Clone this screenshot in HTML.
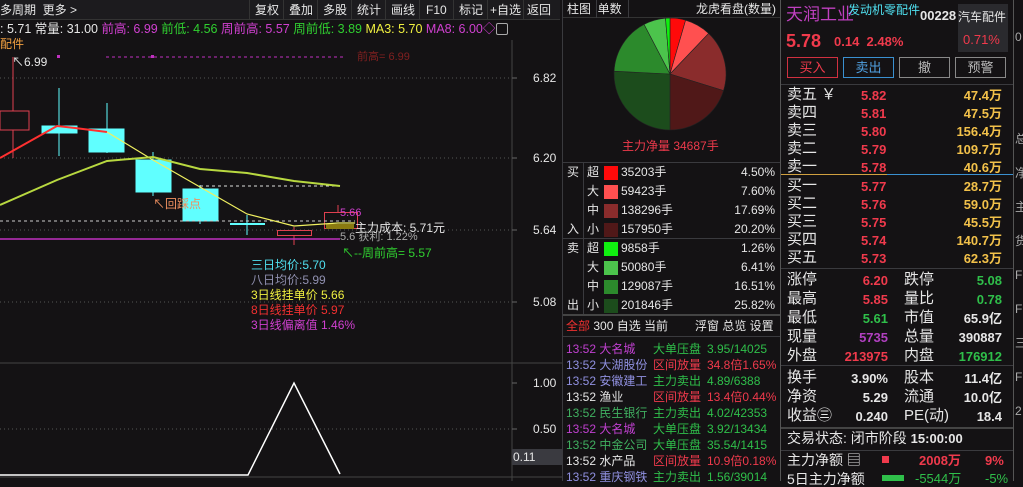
<!DOCTYPE html>
<html><head><meta charset="utf-8"><style>
*{margin:0;padding:0;box-sizing:border-box}
body{width:1023px;height:481px;background:#141214;overflow:hidden;position:relative;font-family:"Liberation Sans","Noto Sans CJK SC",sans-serif;color:#ddd}
.a{position:absolute;white-space:nowrap;line-height:1}
.r{color:#f03a4c}.g{color:#2fbf4a}.y{color:#f2c14a}.w{color:#e6e6e6}
.ln{position:absolute;background:#3a3a3e}
</style></head><body>
<div class="a" style="left:0;top:0;width:560px;height:20px;background:#1c1b1e;border-bottom:1px solid #333"></div>
<div class="a w" style="left:0;top:4px;font-size:12px">多周期&nbsp; 更多 &gt;</div>
<div class="a w" style="left:249px;top:0;height:20px;font-size:12px;display:flex">
<span style="width:34px;border-left:1px solid #333;padding:4px 0 0 5px">复权</span><span style="width:34px;border-left:1px solid #333;padding:4px 0 0 5px">叠加</span><span style="width:34px;border-left:1px solid #333;padding:4px 0 0 5px">多股</span><span style="width:34px;border-left:1px solid #333;padding:4px 0 0 5px">统计</span><span style="width:34px;border-left:1px solid #333;padding:4px 0 0 5px">画线</span><span style="width:34px;border-left:1px solid #333;padding:4px 0 0 6px">F10</span><span style="width:34px;border-left:1px solid #333;padding:4px 0 0 5px">标记</span><span style="width:36px;border-left:1px solid #333;padding:4px 0 0 2px">+自选</span><span style="width:31px;border-left:1px solid #333;padding:4px 0 0 3px">返回</span></div>
<div class="a" style="left:0;top:23px;font-size:12.5px"><span class="w">: 5.71 常量: 31.00 </span><span style="color:#d040d0">前高: 6.99 </span><span style="color:#30d030">前低: 4.56 </span><span style="color:#d040d0">周前高: 5.57 </span><span style="color:#30d030">周前低: 3.89 </span><span style="color:#f0f040">MA3: 5.70 </span><span style="color:#d040d0">MA8: 6.00◇</span></div>
<div class="a" style="left:496px;top:23px;width:12px;height:12px;border:1px solid #aaa;border-radius:2px"></div>
<div class="a" style="left:0;top:38px;font-size:12px;color:#f2a040">配件</div>
<svg class="a" style="left:0;top:40px" width="563" height="441">
<g transform="translate(0,-40)">
<line x1="512" y1="20" x2="512" y2="481" stroke="#444"/>
<g stroke="#555" stroke-dasharray="1,3"><line x1="0" y1="78" x2="512" y2="78"/><line x1="0" y1="158" x2="512" y2="158"/><line x1="0" y1="230" x2="512" y2="230"/><line x1="0" y1="302" x2="512" y2="302"/><line x1="0" y1="429" x2="512" y2="429"/></g>
<g stroke="#666"><line x1="512" y1="78" x2="517" y2="78"/><line x1="512" y1="158" x2="517" y2="158"/><line x1="512" y1="230" x2="517" y2="230"/><line x1="512" y1="302" x2="517" y2="302"/><line x1="512" y1="383" x2="517" y2="383"/><line x1="512" y1="429" x2="517" y2="429"/></g>
<line x1="0" y1="363" x2="563" y2="363" stroke="#444"/>
<line x1="0" y1="477" x2="563" y2="477" stroke="#444"/>
<line x1="106" y1="57" x2="345" y2="57" stroke="#c030c0" stroke-dasharray="3,3"/>
<rect x="57" y="55" width="3" height="3" fill="#c030c0"/><rect x="151" y="55" width="3" height="3" fill="#c030c0"/>
<g stroke="#e04050" fill="none"><line x1="13" y1="57" x2="13" y2="158"/><rect x="0" y="111" width="29" height="19" fill="#141214"/></g>
<g stroke="#60ffff" fill="#60ffff"><line x1="59" y1="88" x2="59" y2="156"/><rect x="42" y="126" width="35" height="7"/>
<line x1="107" y1="103" x2="107" y2="153"/><rect x="89" y="129" width="35" height="23"/>
<line x1="153" y1="152" x2="153" y2="196"/><rect x="136" y="160" width="35" height="32"/>
<line x1="200" y1="185" x2="200" y2="224"/><rect x="183" y="189" width="35" height="32"/>
<line x1="247" y1="215" x2="247" y2="235"/><line x1="230" y1="224" x2="265" y2="224" stroke-width="2"/></g>
<g stroke="#e04050" fill="none"><line x1="294" y1="227" x2="294" y2="245"/><rect x="277.5" y="230.5" width="34" height="5" fill="#141214"/>
<line x1="338" y1="205" x2="338" y2="212"/><rect x="324.5" y="212.5" width="33" height="16"/></g>
<rect x="326" y="224" width="28" height="5" fill="#8a7a10"/>
<line x1="200" y1="186" x2="340" y2="186" stroke="#ddd" stroke-dasharray="3,3"/>
<line x1="0" y1="221" x2="355" y2="221" stroke="#ccc" stroke-dasharray="3,3"/>
<line x1="0" y1="239" x2="340" y2="239" stroke="#c030c0" stroke-width="1.5"/>
<polyline points="0,158 57,126 75,128 107,132" fill="none" stroke="#ff3030" stroke-width="2"/>
<polyline points="107,132 153,160 200,187 247,214 294,226 338,223 355,223" fill="none" stroke="#f0f060" stroke-width="1.2"/>
<polyline points="0,205 57,180 107,161 153,157 200,169 247,173 294,181 340,186" fill="none" stroke="#b8d840" stroke-width="2"/>
<polyline points="0,475 248,475 294,383 340,474" fill="none" stroke="#fff" stroke-width="1.5"/>
<rect x="512" y="449" width="51" height="16" fill="#3a3a40"/>
</g></svg>
<div class="a w" style="left:533px;top:72px;font-size:12px">6.82</div>
<div class="a w" style="left:533px;top:152px;font-size:12px">6.20</div>
<div class="a w" style="left:533px;top:224px;font-size:12px">5.64</div>
<div class="a w" style="left:533px;top:296px;font-size:12px">5.08</div>
<div class="a w" style="left:533px;top:377px;font-size:12px">1.00</div>
<div class="a w" style="left:533px;top:423px;font-size:12px">0.50</div>
<div class="a w" style="left:513px;top:451px;font-size:12px">0.11</div>
<div class="a w" style="left:12px;top:56px;font-size:12px">↖6.99</div>
<div class="a" style="left:357px;top:52px;font-size:11px;color:#802020">前高= 6.99</div>
<div class="a" style="left:153px;top:198px;font-size:12px;color:#f09060">↖回踩点</div>
<div class="a" style="left:340px;top:208px;font-size:11px;color:#d040d0">5.66</div>
<div class="a w" style="left:355px;top:222px;font-size:12px">主力成本: 5.71元</div>
<div class="a" style="left:340px;top:232px;font-size:11px;color:#aaa">5.6 获利: 1.22%</div>
<div class="a" style="left:342px;top:247px;font-size:12px;color:#30d030">↖--周前高= 5.57</div>
<div class="a" style="left:251px;top:258px;font-size:12px;line-height:15px">
<div style="color:#50e0f0">三日均价:5.70</div><div style="color:#9090b0">八日均价:5.99</div><div style="color:#f0f040">3日线挂单价 5.66</div><div style="color:#f03030">8日线挂单价 5.97</div><div style="color:#d040d0">3日线偏离值 1.46%</div></div>
<div class="ln" style="left:562px;top:0;width:1px;height:481px"></div>
<div class="a" style="left:563px;top:0;width:217px;height:18px;border-bottom:1px solid #333"></div>
<div class="a w" style="left:567px;top:3px;font-size:12px">柱图 &nbsp;单数</div>
<div class="ln" style="left:596px;top:0;width:1px;height:18px"></div><div class="ln" style="left:628px;top:0;width:1px;height:18px"></div>
<div class="a w" style="left:696px;top:3px;font-size:12px">龙虎看盘(数量)</div>
<svg class="a" style="left:563px;top:0" width="217" height="160"><g transform="translate(-563,0)" stroke="#222" stroke-width="0.6">
<path d="M670,74 L670,18 A56,56 0 0 1 685.6,20.2Z" fill="#ff0a0a"/>
<path d="M670,74 L685.6,20.2 A56,56 0 0 1 708.6,33.4Z" fill="#ff5050"/>
<path d="M670,74 L708.6,33.4 A56,56 0 0 1 723.5,90.6Z" fill="#8a2c2c"/>
<path d="M670,74 L723.5,90.6 A56,56 0 0 1 670,130Z" fill="#501818"/>
<path d="M670,74 L670,130 A56,56 0 0 1 614.1,71.2Z" fill="#1c4c1c"/>
<path d="M670,74 L614.1,71.2 A56,56 0 0 1 644.1,24.4Z" fill="#2c8a2c"/>
<path d="M670,74 L644.1,24.4 A56,56 0 0 1 665.5,18.2Z" fill="#4cc44c"/>
<path d="M670,74 L665.5,18.2 A56,56 0 0 1 670,18Z" fill="#10f010"/>
</g></svg>
<div class="a" style="left:622px;top:140px;font-size:12px;color:#f03a4c">主力净量 34687手</div>
<div class="ln" style="left:563px;top:162px;width:217px;height:1px"></div>
<div class="ln" style="left:563px;top:238px;width:217px;height:1px"></div>
<div class="ln" style="left:563px;top:314px;width:217px;height:2px;background:#444"></div>
<div class="ln" style="left:583px;top:162px;width:1px;height:152px"></div>
<div class="a w" style="left:563px;top:163px;width:217px;font-size:12px;line-height:19px">
<div style="position:absolute;left:4px;top:0">买</div><div style="position:absolute;left:4px;top:57px">入</div><div style="position:absolute;left:4px;top:76px">卖</div><div style="position:absolute;left:4px;top:133px">出</div>
<div style="position:absolute;left:24px;top:0">超<br>大<br>中<br>小<br>超<br>大<br>中<br>小</div>
<div style="position:absolute;left:41px;top:3px;width:14px;line-height:0">
<i style="display:block;height:14px;margin-bottom:5px;background:#ff0a0a"></i><i style="display:block;height:14px;margin-bottom:5px;background:#ff5050"></i><i style="display:block;height:14px;margin-bottom:5px;background:#8a2c2c"></i><i style="display:block;height:14px;margin-bottom:5px;background:#501818"></i><i style="display:block;height:14px;margin-bottom:5px;background:#10f010"></i><i style="display:block;height:14px;margin-bottom:5px;background:#4cc44c"></i><i style="display:block;height:14px;margin-bottom:5px;background:#2c8a2c"></i><i style="display:block;height:14px;background:#1c4c1c"></i></div>
<div style="position:absolute;left:58px;top:0">35203手<br>59423手<br>138296手<br>157950手<br>9858手<br>50080手<br>129087手<br>201846手</div>
<div style="position:absolute;right:5px;top:0;text-align:right">4.50%<br>7.60%<br>17.69%<br>20.20%<br>1.26%<br>6.41%<br>16.51%<br>25.82%</div></div>
<div class="a w" style="left:566px;top:320px;font-size:12px"><span style="color:#f03030">全部</span> 300 自选 当前</div>
<div class="a w" style="left:695px;top:320px;font-size:12px">浮窗 总览 设置</div>
<div class="ln" style="left:563px;top:336px;width:217px;height:1px"></div>
<div class="a" style="left:566px;top:341px;font-size:12px;line-height:16px">
<div><span style="color:#c040d0">13:52 大名城</span></div><div style="color:#9090e0">13:52 大湖股份</div><div style="color:#9090e0">13:52 安徽建工</div><div class="w">13:52 渔业</div><div style="color:#40b060">13:52 民生银行</div><div style="color:#c040d0">13:52 大名城</div><div style="color:#40b060">13:52 中金公司</div><div class="w">13:52 水产品</div><div style="color:#9090e0">13:52 重庆钢铁</div></div>
<div class="a" style="left:653px;top:341px;font-size:12px;line-height:16px">
<div class="g">大单压盘</div><div class="r">区间放量</div><div class="g">主力卖出</div><div class="r">区间放量</div><div class="g">主力卖出</div><div class="g">大单压盘</div><div class="g">大单压盘</div><div class="r">区间放量</div><div class="g">主力卖出</div></div>
<div class="a" style="left:707px;top:341px;font-size:12px;line-height:16px">
<div class="g">3.95/14025</div><div class="r">34.8倍1.65%</div><div class="g">4.89/6388</div><div class="r">13.4倍0.44%</div><div class="g">4.02/42353</div><div class="g">3.92/13434</div><div class="g">35.54/1415</div><div class="r">10.9倍0.18%</div><div class="g">1.56/39014</div></div>
<div class="ln" style="left:780px;top:0;width:1px;height:481px;background:#555"></div>
<div class="ln" style="left:1013px;top:0;width:1px;height:481px;background:#555"></div>
<div class="a" style="left:786px;top:6px;font-size:17px;color:#c040c0">天润工业</div>
<div class="a" style="left:848px;top:4px;font-size:12px;color:#50e0f0">发动机零配件</div>
<div class="a w" style="left:920px;top:9px;font-size:13px;font-weight:bold">00228</div>
<div class="a" style="left:958px;top:4px;width:50px;height:48px;background:#2a2a2e"></div>
<div class="a w" style="left:958px;top:11px;font-size:12px">汽车配件</div>
<div class="a r" style="left:963px;top:33px;font-size:13px">0.71%</div>
<div class="a r" style="left:786px;top:32px;font-size:18px;font-weight:bold">5.78</div>
<div class="a r" style="left:834px;top:35px;font-size:13px;font-weight:bold">0.14&nbsp; 2.48%</div>
<div class="a" style="left:787px;top:57px;width:51px;height:21px;border:1px solid #d03040;color:#f03a4c;font-size:13px;text-align:center;padding-top:3px">买入</div>
<div class="a" style="left:843px;top:57px;width:51px;height:21px;border:1px solid #3a90d0;color:#50a0e0;font-size:13px;text-align:center;padding-top:3px">卖出</div>
<div class="a" style="left:899px;top:57px;width:51px;height:21px;border:1px solid #888;color:#bbb;font-size:13px;text-align:center;padding-top:3px">撤</div>
<div class="a" style="left:955px;top:57px;width:51px;height:21px;border:1px solid #888;color:#bbb;font-size:13px;text-align:center;padding-top:3px">预警</div>
<div class="ln" style="left:781px;top:84px;width:232px;height:1px"></div>
<div class="a" style="left:781px;top:174px;width:106px;height:1px;background:#d0a040"></div>
<div class="a" style="left:887px;top:174px;width:126px;height:1px;background:#3a90d0"></div>
<div class="a w" style="left:787px;top:86px;font-size:15px;line-height:18px">卖五 ￥<br>卖四<br>卖三<br>卖二<br>卖一</div>
<div class="a r" style="left:861px;top:87px;font-size:13px;font-weight:bold;line-height:18px">5.82<br>5.81<br>5.80<br>5.79<br>5.78</div>
<div class="a y" style="right:21px;top:87px;font-size:13px;font-weight:bold;line-height:18px;text-align:right">47.4万<br>47.5万<br>156.4万<br>109.7万<br>40.6万</div>
<div class="a w" style="left:787px;top:177px;font-size:15px;line-height:18px">买一<br>买二<br>买三<br>买四<br>买五</div>
<div class="a r" style="left:861px;top:178px;font-size:13px;font-weight:bold;line-height:18px">5.77<br>5.76<br>5.75<br>5.74<br>5.73</div>
<div class="a y" style="right:21px;top:178px;font-size:13px;font-weight:bold;line-height:18px;text-align:right">28.7万<br>59.0万<br>45.5万<br>140.7万<br>62.3万</div>
<div class="ln" style="left:781px;top:268px;width:232px;height:1px"></div>
<div class="a w" style="left:787px;top:270px;font-size:15px;line-height:19px">涨停<br>最高<br>最低<br>现量<br>外盘</div>
<div class="a" style="right:135px;top:271px;font-size:13px;font-weight:bold;line-height:19px;text-align:right"><span class="r">6.20</span><br><span class="r">5.85</span><br><span class="g">5.61</span><br><span style="color:#b040c0">5735</span><br><span class="r">213975</span></div>
<div class="a w" style="left:904px;top:270px;font-size:15px;line-height:19px">跌停<br>量比<br>市值<br>总量<br>内盘</div>
<div class="a" style="right:21px;top:271px;font-size:13px;font-weight:bold;line-height:19px;text-align:right"><span class="g">5.08</span><br><span class="g">0.78</span><br><span class="w">65.9亿</span><br><span class="w">390887</span><br><span class="g">176912</span></div>
<div class="ln" style="left:781px;top:365px;width:232px;height:1px"></div>
<div class="a w" style="left:787px;top:368px;font-size:15px;line-height:19px">换手<br>净资<br>收益㊂</div>
<div class="a w" style="right:135px;top:369px;font-size:13px;font-weight:bold;line-height:19px;text-align:right">3.90%<br>5.29<br>0.240</div>
<div class="a w" style="left:904px;top:368px;font-size:15px;line-height:19px">股本<br>流通<br>PE(动)</div>
<div class="a w" style="right:21px;top:369px;font-size:13px;font-weight:bold;line-height:19px;text-align:right">11.4亿<br>10.0亿<br>18.4</div>
<div class="ln" style="left:781px;top:427px;width:232px;height:2px;background:#444"></div>
<div class="a w" style="left:787px;top:431px;font-size:14px">交易状态: 闭市阶段 <b style="font-size:13px">15:00:00</b></div>
<div class="ln" style="left:781px;top:450px;width:232px;height:1px"></div>
<div class="a w" style="left:787px;top:453px;font-size:14px">主力净额 ▤</div>
<div class="a" style="left:882px;top:456px;width:7px;height:7px;background:#f03a4c"></div>
<div class="a r" style="left:919px;top:454px;font-size:13px;font-weight:bold">2008万</div>
<div class="a r" style="left:985px;top:454px;font-size:13px;font-weight:bold">9%</div>
<div class="a w" style="left:787px;top:472px;font-size:14px">5日主力净额</div>
<div class="a" style="left:882px;top:475px;width:22px;height:6px;background:#2fbf4a"></div>
<div class="a g" style="left:915px;top:472px;font-size:13px">-5544万</div>
<div class="a g" style="left:985px;top:472px;font-size:13px">-5%</div>
<div class="a" style="left:1015px;top:20px;font-size:12px;color:#aaa;line-height:34px">0<br><br><br>总<br>净<br>主<br>货<br>F<br>F<br>三<br>F<br>2</div>
</body></html>
